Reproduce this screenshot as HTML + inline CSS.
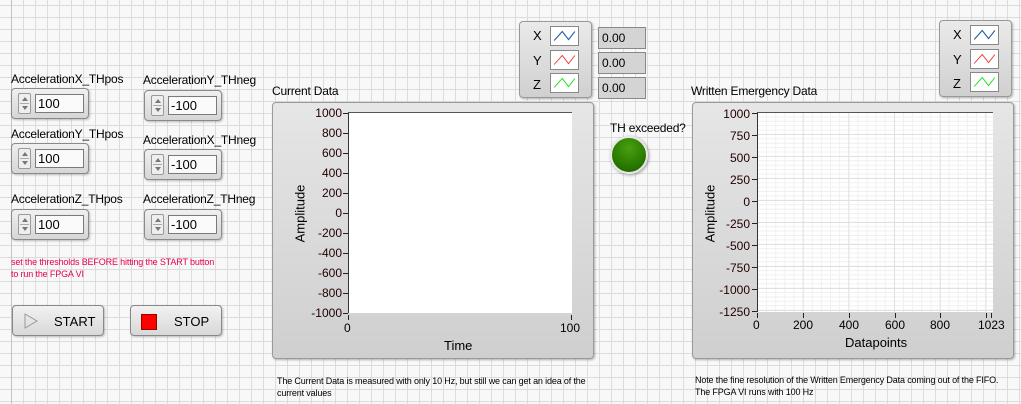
<!DOCTYPE html>
<html><head><meta charset="utf-8"><style>
*{margin:0;padding:0;box-sizing:border-box}
body{width:1021px;height:404px;overflow:hidden;position:relative;font-family:"Liberation Sans",sans-serif;font-size:12px;color:#000;
background-color:#f8f8f8;
background-image:linear-gradient(to right,#dcdcdc 1px,transparent 1px),linear-gradient(to bottom,#dcdcdc 1px,transparent 1px);
background-size:12px 12px;background-position:11px 5px;}
.a{position:absolute;white-space:nowrap}
.lb{letter-spacing:-0.2px}
.vl{position:absolute;left:11px;top:0;width:1px;height:404px;background:#c4c4c4}
.num{position:absolute;width:78px;height:31px;border:1px solid #8a8a8a;border-radius:4px;background:linear-gradient(#f0f0f0,#d6d6d6);box-shadow:1px 1px 2px rgba(0,0,0,.25)}
.sp{position:absolute;left:6px;top:4px;width:13px;height:21px;border:1px solid #9a9a9a;border-radius:2px;background:#eee}
.sp:before{content:"";position:absolute;left:3px;top:3px;border:3px solid transparent;border-bottom:4px solid #777;border-top:0}
.sp:after{content:"";position:absolute;left:3px;bottom:3px;border:3px solid transparent;border-top:4px solid #777;border-bottom:0}
.sp i{position:absolute;left:1px;right:1px;top:9px;height:1px;background:#aaa}
.fld{position:absolute;left:23px;top:5px;width:49px;height:19px;border:1px solid #7a7a7a;background:#fafafa;font-size:13px;line-height:17px;padding-left:2px}
.btn{position:absolute;width:92px;height:31px;border:1px solid #888;border-radius:4px;background:linear-gradient(#f2f2f2,#d8d8d8);box-shadow:1px 1px 2px rgba(0,0,0,.25);font-size:13px}
.frame{position:absolute;border:1px solid #9a9a9a;border-radius:4px;background:linear-gradient(#e6e6e6,#cfcfcf);box-shadow:1px 1px 2px rgba(0,0,0,.3)}
.plot{position:absolute;background:#fff;border-left:1px solid #333;border-top:1px solid #555}
.yl{position:absolute;text-align:right;width:50px;font-size:12px;line-height:12px;color:#200}
.tk{position:absolute;height:1px;width:5px;background:#222}
.xt{position:absolute;width:1px;height:5px;background:#222}
.leg{position:absolute;width:73px;height:77px;border:1px solid #999;border-radius:4px;background:linear-gradient(#eaeaea,#d0d0d0);box-shadow:1px 1px 2px rgba(0,0,0,.3)}
.leg .l{position:absolute;left:13px;font-size:13px}
.leg svg{position:absolute;left:30px;width:29px;height:20px;background:#fff;border:1px solid #888}
.ind{position:absolute;left:598px;width:48px;height:22px;border:1px solid #888;background:#d4d4d4;font-size:12px;line-height:20px;padding-left:3px}
.rot{position:absolute;transform:rotate(-90deg);transform-origin:center;font-size:13px;width:80px;text-align:center}
.note{font-size:9px;line-height:12px;letter-spacing:-0.15px}
</style></head><body>
<div class="vl"></div>

<div class="a lb" style="left:11px;top:72px">AccelerationX_THpos</div>
<div class="a lb" style="left:143px;top:73px">AccelerationY_THneg</div>
<div class="a lb" style="left:11px;top:127px">AccelerationY_THpos</div>
<div class="a lb" style="left:143px;top:133px">AccelerationX_THneg</div>
<div class="a lb" style="left:11px;top:192px">AccelerationZ_THpos</div>
<div class="a lb" style="left:143px;top:192px">AccelerationZ_THneg</div>

<div class="num" style="left:11px;top:88px"><div class="sp"><i></i></div><div class="fld">100</div></div>
<div class="num" style="left:144px;top:90px"><div class="sp"><i></i></div><div class="fld">-100</div></div>
<div class="num" style="left:11px;top:143px"><div class="sp"><i></i></div><div class="fld">100</div></div>
<div class="num" style="left:144px;top:149px"><div class="sp"><i></i></div><div class="fld">-100</div></div>
<div class="num" style="left:11px;top:209px"><div class="sp"><i></i></div><div class="fld">100</div></div>
<div class="num" style="left:144px;top:209px"><div class="sp"><i></i></div><div class="fld">-100</div></div>

<div class="a note" style="left:11px;top:256px;color:#e8004a">set the thresholds BEFORE hitting the START button<br>to run the FPGA VI</div>

<div class="btn" style="left:12px;top:305px"><svg style="position:absolute;left:11px;top:7px" width="14" height="16"><path d="M1 1 L13 8 L1 15 Z" fill="none" stroke="#999" stroke-width="1"/></svg><span style="position:absolute;left:41px;top:8px">START</span></div>
<div class="btn" style="left:130px;top:305px"><div style="position:absolute;left:10px;top:8px;width:16px;height:16px;background:#f00;border:1px solid #900"></div><span style="position:absolute;left:43px;top:8px">STOP</span></div>

<!-- Current Data -->
<div class="a lb" style="left:272px;top:84px">Current Data</div>
<div class="frame" style="left:272px;top:102px;width:322px;height:257px"></div>
<div class="plot" style="left:348px;top:112px;width:224px;height:201px"></div>
<div class="rot" style="left:260px;top:206px">Amplitude</div>
<div class="xt" style="left:348px;top:315px"></div><div class="xt" style="left:571px;top:315px"></div>
<div class="a" style="left:344px;top:321px">0</div>
<div class="a" style="left:560px;top:321px">100</div>
<div class="a" style="left:444px;top:338px;font-size:13px">Time</div>
<div class="a note" style="left:277px;top:375px">The Current Data is measured with only 10 Hz, but still we can get an idea of the<br>current values</div>

<!-- legend left -->
<div class="leg" style="left:519px;top:21px">
<span class="l" style="top:6px">X</span><svg style="top:4px" viewBox="0 0 29 20"><path d="M3 15 L12 5 L19 14 L26 5" fill="none" stroke="#2060a0" stroke-width="1.2"/></svg>
<span class="l" style="top:31px">Y</span><svg style="top:28px" viewBox="0 0 29 20"><path d="M3 15 L12 5 L19 14 L26 5" fill="none" stroke="#f03030" stroke-width="1"/></svg>
<span class="l" style="top:55px">Z</span><svg style="top:51px" viewBox="0 0 29 20"><path d="M3 15 L12 5 L19 14 L26 5" fill="none" stroke="#10e010" stroke-width="1"/></svg>
</div>
<div class="ind" style="top:27px">0.00</div>
<div class="ind" style="top:52px">0.00</div>
<div class="ind" style="top:77px">0.00</div>

<div class="a lb" style="left:610px;top:121px">TH exceeded?</div>
<div style="position:absolute;left:610px;top:136px;width:38px;height:38px;border-radius:50%;border:2px solid #e8e8e8;background:radial-gradient(circle at 50% 30%,#48a010,#2a7a00 60%,#1c5a00);box-shadow:1px 1px 3px rgba(0,0,0,.4)"></div>

<!-- Written Emergency Data -->
<div class="a lb" style="left:691px;top:84px">Written Emergency Data</div>
<div class="frame" style="left:692px;top:102px;width:322px;height:257px"></div>
<div class="plot" style="left:757px;top:112px;width:236px;height:200px;
background-color:#fff;
background-image:linear-gradient(to right,#e0e0e0 1px,transparent 1px),linear-gradient(to bottom,#e0e0e0 1px,transparent 1px),linear-gradient(to right,#f0f0f0 1px,transparent 1px),linear-gradient(to bottom,#f0f0f0 1px,transparent 1px);
background-size:45.7px 22px,45.7px 22px,9.14px 4.4px,9.14px 4.4px;background-position:-1px -1px"></div>
<div class="rot" style="left:670px;top:206px">Amplitude</div>
<div class="a" style="left:753px;top:318px">0</div>
<div class="a" style="left:793px;top:318px">200</div>
<div class="a" style="left:839px;top:318px">400</div>
<div class="a" style="left:885px;top:318px">600</div>
<div class="a" style="left:930px;top:318px">800</div>
<div class="a" style="left:978px;top:318px">1023</div>
<div class="xt" style="left:757px;top:313px"></div><div class="xt" style="left:803px;top:313px"></div><div class="xt" style="left:849px;top:313px"></div><div class="xt" style="left:895px;top:313px"></div><div class="xt" style="left:940px;top:313px"></div><div class="xt" style="left:986px;top:313px"></div><div class="xt" style="left:991px;top:313px"></div>
<div class="a" style="left:845px;top:335px;font-size:13px">Datapoints</div>
<div class="a note" style="left:695px;top:374px">Note the fine resolution of the Written Emergency Data coming out of the FIFO.<br>The FPGA VI runs with 100 Hz</div>

<!-- legend right -->
<div class="leg" style="left:939px;top:20px">
<span class="l" style="top:6px">X</span><svg style="top:4px" viewBox="0 0 29 20"><path d="M3 15 L12 5 L19 14 L26 5" fill="none" stroke="#2060a0" stroke-width="1.2"/></svg>
<span class="l" style="top:31px">Y</span><svg style="top:28px" viewBox="0 0 29 20"><path d="M3 15 L12 5 L19 14 L26 5" fill="none" stroke="#f03030" stroke-width="1"/></svg>
<span class="l" style="top:55px">Z</span><svg style="top:51px" viewBox="0 0 29 20"><path d="M3 15 L12 5 L19 14 L26 5" fill="none" stroke="#10e010" stroke-width="1"/></svg>
</div>

<!-- left y axis -->
<div class="yl" style="left:292px;top:107px">1000</div><div class="tk" style="left:343px;top:113px"></div>
<div class="yl" style="left:292px;top:127px">800</div><div class="tk" style="left:343px;top:133px"></div>
<div class="yl" style="left:292px;top:147px">600</div><div class="tk" style="left:343px;top:153px"></div>
<div class="yl" style="left:292px;top:167px">400</div><div class="tk" style="left:343px;top:173px"></div>
<div class="yl" style="left:292px;top:187px">200</div><div class="tk" style="left:343px;top:193px"></div>
<div class="yl" style="left:292px;top:207px">0</div><div class="tk" style="left:343px;top:213px"></div>
<div class="yl" style="left:292px;top:227px">-200</div><div class="tk" style="left:343px;top:233px"></div>
<div class="yl" style="left:292px;top:247px">-400</div><div class="tk" style="left:343px;top:253px"></div>
<div class="yl" style="left:292px;top:267px">-600</div><div class="tk" style="left:343px;top:273px"></div>
<div class="yl" style="left:292px;top:287px">-800</div><div class="tk" style="left:343px;top:293px"></div>
<div class="yl" style="left:292px;top:307px">-1000</div><div class="tk" style="left:343px;top:313px"></div>

<!-- right y axis -->
<div class="yl" style="left:700px;top:108px">1000</div><div class="tk" style="left:752px;top:113px"></div>
<div class="yl" style="left:700px;top:130px">750</div><div class="tk" style="left:752px;top:135px"></div>
<div class="yl" style="left:700px;top:152px">500</div><div class="tk" style="left:752px;top:157px"></div>
<div class="yl" style="left:700px;top:174px">250</div><div class="tk" style="left:752px;top:179px"></div>
<div class="yl" style="left:700px;top:196px">0</div><div class="tk" style="left:752px;top:201px"></div>
<div class="yl" style="left:700px;top:218px">-250</div><div class="tk" style="left:752px;top:223px"></div>
<div class="yl" style="left:700px;top:240px">-500</div><div class="tk" style="left:752px;top:245px"></div>
<div class="yl" style="left:700px;top:262px">-750</div><div class="tk" style="left:752px;top:267px"></div>
<div class="yl" style="left:700px;top:284px">-1000</div><div class="tk" style="left:752px;top:289px"></div>
<div class="yl" style="left:700px;top:306px">-1250</div><div class="tk" style="left:752px;top:311px"></div>
</body></html>
